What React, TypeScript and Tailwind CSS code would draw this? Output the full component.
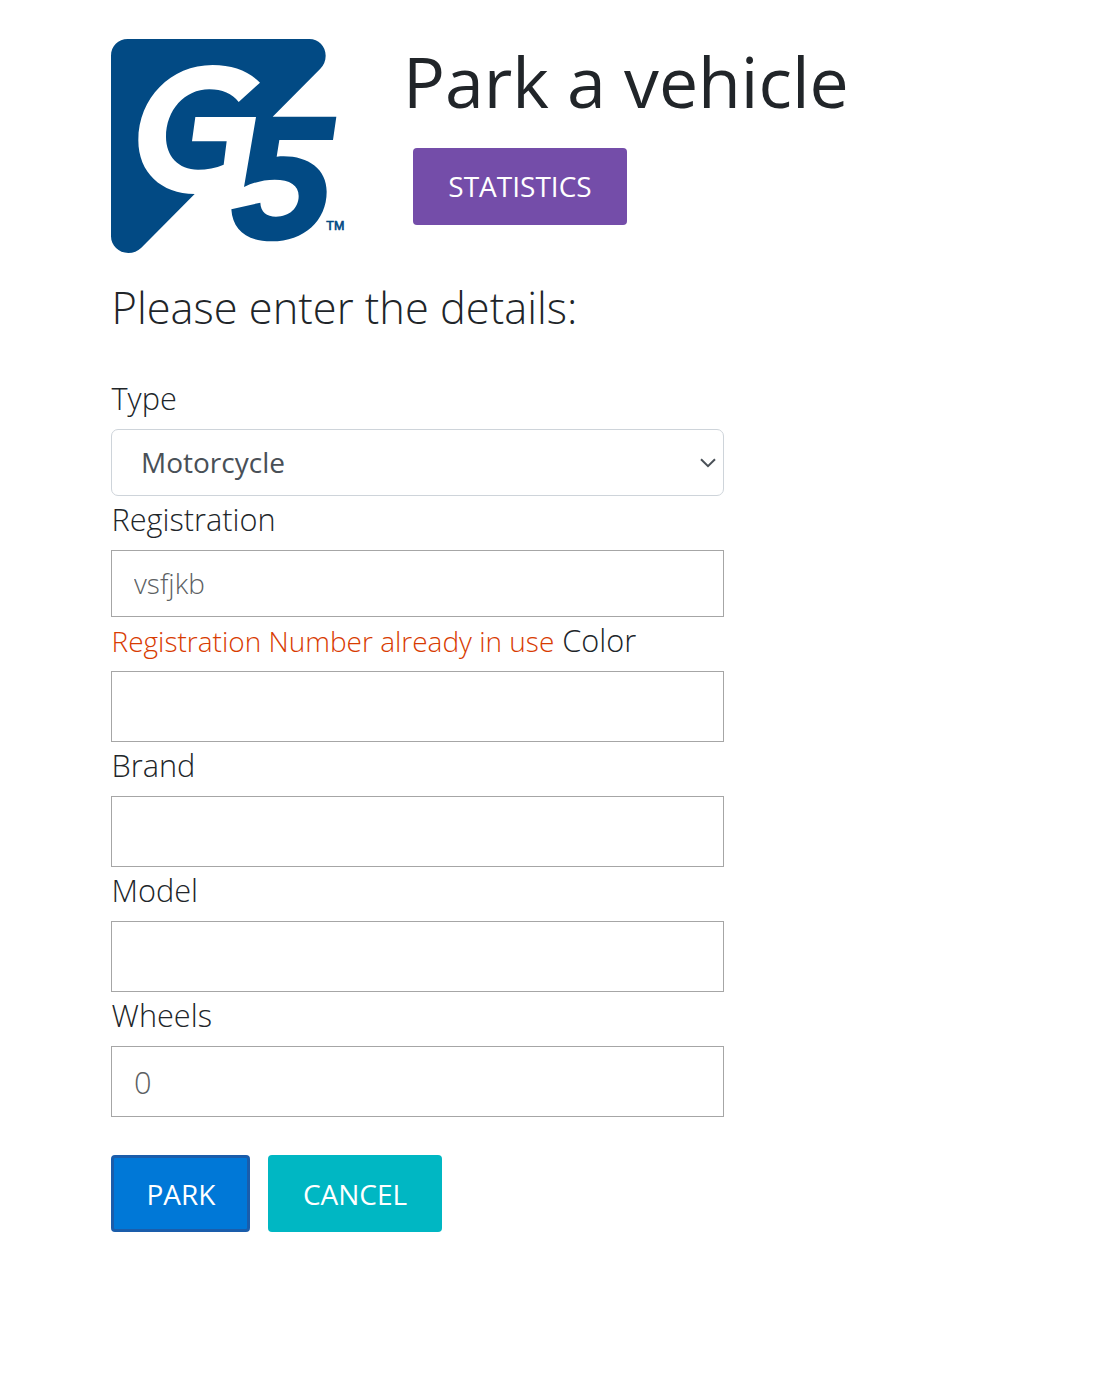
import React from "react";

function Logo() {
  return (
    <svg viewBox="33 27 705 645" className="h-[215px] w-[235px] shrink-0" aria-label="G5">
      <path
        fill="#024a84"
        d="M83 27H628C655 27 677 49 677 77C677 92 671 106 661 116L518 260H709L699 330H538L530 380C615 372 680 412 680 485C680 572 612 634 515 634C440 634 398 600 394 538L481 518C482 545 500 560 528 560C568 560 596 534 596 498C596 466 570 449 524 449C492 449 461 457 432 471L468 261H286L276 334H380L371 404C348 414 320 419 294 419C235 419 198 378 198 321C198 241 254 178 328 178C366 178 397 191 416 216L480 158C447 124 398 105 338 105C212 105 115 205 115 331C115 427 183 492 284 492L124 653C113 663 100 669 85 669C56 669 33 647 33 619V77C33 49 55 27 83 27Z"
      />
      <text x="679" y="600.5" fill="#024a84" stroke="#024a84" strokeWidth="2" fontFamily="Liberation Sans, sans-serif" fontSize="37" textLength="54" lengthAdjust="spacingAndGlyphs">
        TM
      </text>
    </svg>
  );
}

const label = "mb-2 block h-[46px] whitespace-nowrap pl-[0.5px] text-[30.7px] leading-[46px]";
const field = "block w-[613px] border border-[#a6a6a6] bg-white px-[22px] font-light text-[#5c5f63] outline-none";
const button = "h-[77px] rounded-[4px] text-center text-[28px] font-normal text-white";

function Field({ name, value = "" }: { name: string; value?: string }) {
  return (
    <div>
      <label className={label}>{name}</label>
      <input className={`${field} h-[71px] text-[30.8px]`} defaultValue={value} />
    </div>
  );
}

export default function App() {
  return (
    <main className="min-h-[1380px] bg-white pl-[111px] pt-[39px] font-['Open_Sans',sans-serif] font-light text-[#212529]">
      <header className="flex h-[214px]">
        <Logo />
        <div className="ml-[57px]">
          <h1 className="whitespace-nowrap text-[69.8px] font-normal leading-[84px]">Park a vehicle</h1>
          <button className={`${button} ml-[10px] mt-[25px] block w-[214px] bg-[#744da9] pb-[2px]`}>STATISTICS</button>
        </div>
      </header>
      <h2 className="mb-[37px] mt-[25px] pl-[0.5px] text-[43.4px] font-light leading-[60px]">Please enter the details:</h2>
      <form>
        <label className={label}>Type</label>
        <div className="flex h-[67px] w-[613px] items-center justify-between rounded-[7px] border border-[#ced4da] pl-[29px] pr-[7px] text-[28px] font-normal text-[#495057]">
          <span className="pb-[2px]">Motorcycle</span>
          <svg width="16" height="10" viewBox="0 0 16 10" fill="none" stroke="#495057" strokeWidth="2">
            <path d="M1 1.2L8 8.2L15 1.2" />
          </svg>
        </div>
        <label className={label}>Registration</label>
        <input className={`${field} h-[67px] pb-[2px] text-[28px]`} defaultValue="vsfjkb" />
        <div className={label}>
          <span className="text-[28px] text-[#d83b01]">Registration Number already in use</span> <span>Color</span>
        </div>
        <input className={`${field} h-[71px] text-[30.8px]`} />
        <Field name="Brand" />
        <Field name="Model" />
        <Field name="Wheels" value="0" />
        <div className="mt-[38px] flex gap-[18px]">
          <button type="button" className={`${button} w-[139px] border-[3px] border-[#1a5dab] bg-[#0078d7] pl-px`}>PARK</button>
          <button type="button" className={`${button} w-[174px] bg-[#00b7c3]`}>CANCEL</button>
        </div>
      </form>
    </main>
  );
}
